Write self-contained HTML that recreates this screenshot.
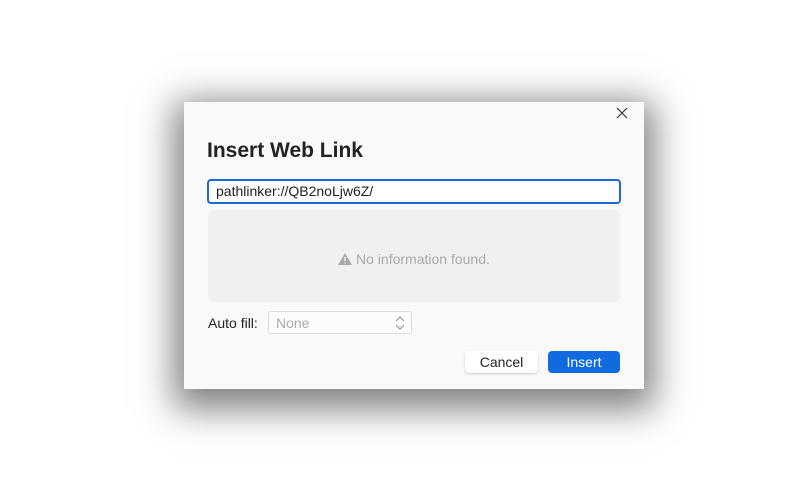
<!DOCTYPE html>
<html><head><style>
body{margin:0;width:798px;height:479px;background:#fff;position:relative;overflow:hidden;font-family:"Liberation Sans",sans-serif}
.dlg{position:absolute;left:184px;top:102px;width:460px;height:287px;background:#f9f9f9;box-shadow:0 10px 34px 10px rgba(0,0,0,0.5)}
.t{position:absolute;left:23px;top:37px;font-size:21px;font-weight:bold;color:#222}
.in{position:absolute;left:23px;top:77px;height:21px;border:2px solid #1a6ad6;border-radius:4px;background:#fff;font-size:14px;line-height:21px;padding-left:7px;box-sizing:content-box;width:403px;color:#222}
.box{position:absolute;left:24px;top:108px;width:412px;height:92px;background:#f0f0f0;border-radius:7px;color:#aaa;font-size:14px;text-align:center;line-height:98px}
.lbl{position:absolute;left:24px;top:213px;font-size:14px;color:#222}
.sel{position:absolute;left:84px;top:209px;border:1px solid #ddd;border-radius:3px;background:#fcfcfc;color:#aaa;font-size:14px;line-height:23px;padding-left:7px;box-sizing:border-box;width:144px;height:23px}
.btn{position:absolute;top:249px;height:22px;border-radius:4px;font-size:14px;line-height:22px;text-align:center}
.x{position:absolute;left:432px;top:5px}
</style></head><body>
<div class="dlg">
<svg class="x" width="12" height="12" viewBox="0 0 12 12"><path d="M1 1L11 11M11 1L1 11" stroke="#333" stroke-width="1.2"/></svg>
<div class="t">Insert Web Link</div>
<div class="in">pathlinker://QB2noLjw6Z/</div>
<div class="box"><svg width="14" height="12" viewBox="0 0 14 12" style="vertical-align:-1px"><path d="M7 0L14 12H0Z" fill="#aaa"/><path d="M7 4V8M7 9.5V10.5" stroke="#f0f0f0" stroke-width="1.5"/></svg> No information found.</div>
<div class="lbl">Auto fill:</div>
<div class="sel">None<svg width="10" height="16" viewBox="0 0 10 16" style="position:absolute;right:6px;top:3px"><path d="M1 6L5 2L9 6M1 10L5 14L9 10" stroke="#999" fill="none" stroke-width="1.2"/></svg></div>
<div class="btn" style="left:281px;width:73px;background:#fff;box-shadow:0 1px 2px rgba(0,0,0,0.2);color:#222">Cancel</div>
<div class="btn" style="left:364px;width:72px;background:#116ae0;color:#fff">Insert</div>
</div>
</body></html>
